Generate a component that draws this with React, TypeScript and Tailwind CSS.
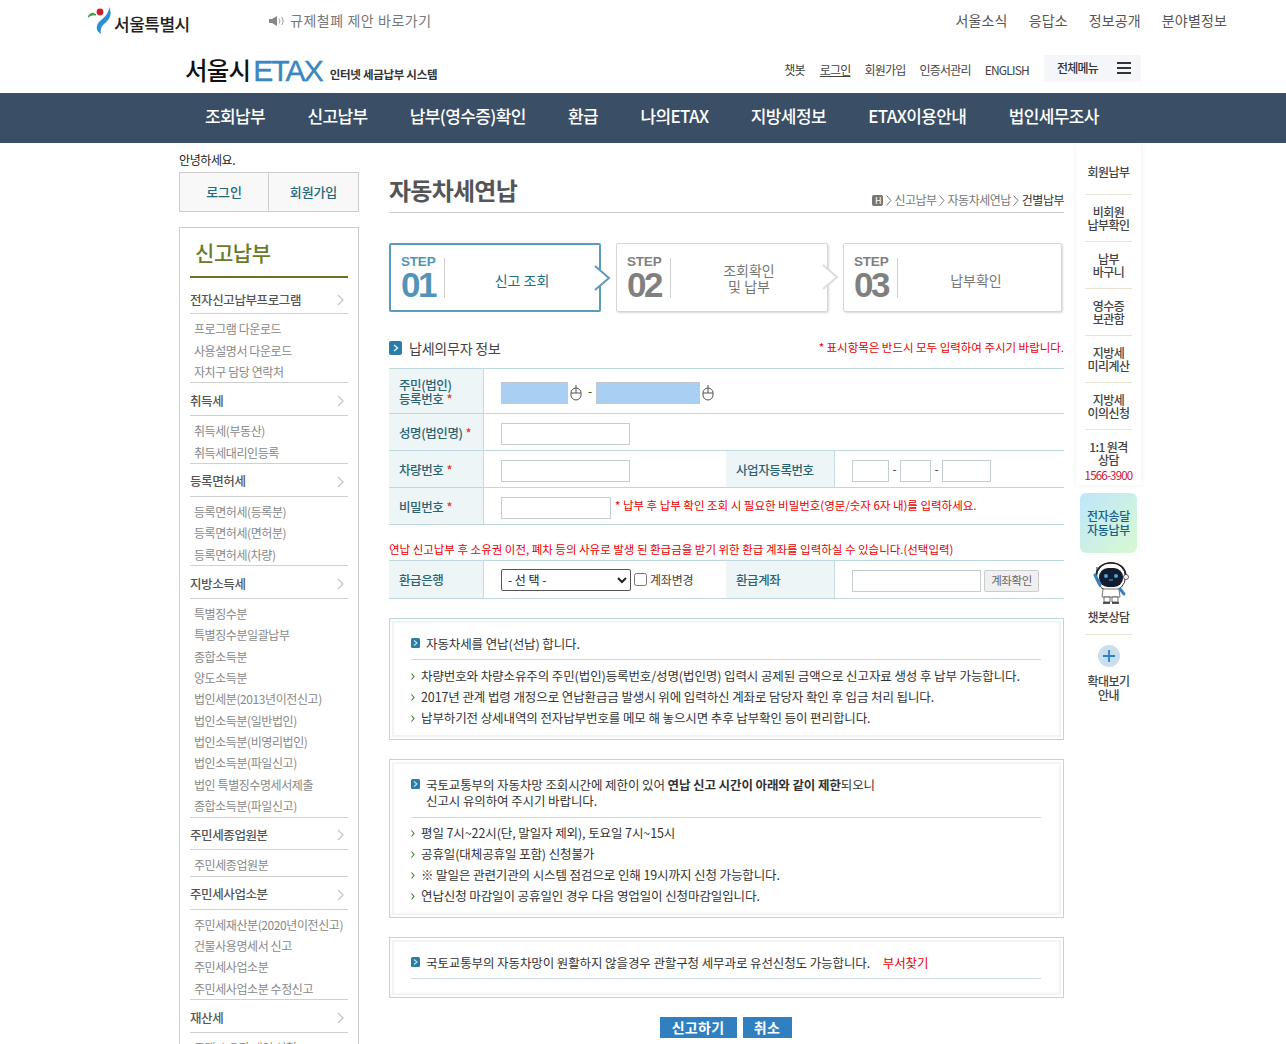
import React from "react";

const font = { fontFamily: '"Noto Sans CJK KR", "Noto Sans", sans-serif' };

const sections: { title: string; items: string[] }[] = [
  { title: "전자신고납부프로그램", items: ["프로그램 다운로드", "사용설명서 다운로드", "자치구 담당 연락처"] },
  { title: "취득세", items: ["취득세(부동산)", "취득세대리인등록"] },
  { title: "등록면허세", items: ["등록면허세(등록분)", "등록면허세(면허분)", "등록면허세(차량)"] },
  {
    title: "지방소득세",
    items: ["특별징수분", "특별징수분일괄납부", "종합소득분", "양도소득분", "법인세분(2013년이전신고)", "법인소득분(일반법인)", "법인소득분(비영리법인)", "법인소득분(파일신고)", "법인 특별징수명세서제출", "종합소득분(파일신고)"],
  },
  { title: "주민세종업원분", items: ["주민세종업원분"] },
  { title: "주민세사업소분", items: ["주민세재산분(2020년이전신고)", "건물사용명세서 신고", "주민세사업소분", "주민세사업소분 수정신고"] },
  { title: "재산세", items: ["주택 소유자 개인 신청"] },
];

function Chevron() {
  return (
    <svg width="7" height="12" viewBox="0 0 7 12" fill="none" className="shrink-0">
      <path d="M1 1l5 5-5 5" stroke="#c4c4c4" strokeWidth="1.2" />
    </svg>
  );
}

function Crumb() {
  return (
    <svg width="6" height="11" viewBox="0 0 6 11" fill="none" className="shrink-0 mx-[2.5px]">
      <path d="M0.5 0.5l4.500 5-4.500 5" stroke="#777" strokeWidth="1" />
    </svg>
  );
}

function MouseIcon() {
  return (
    <svg width="12" height="17" viewBox="0 0 12 17" fill="none" className="shrink-0">
      <rect x="1" y="4" width="10" height="12" rx="5" fill="#fff" stroke="#555" />
      <path d="M1 9h10M6 4v5M6 4V1" stroke="#555" />
    </svg>
  );
}

function Bullet() {
  return (
    <svg width="9" height="10" viewBox="0 0 9 10" className="shrink-0">
      <rect width="9" height="10" rx="1.5" fill="#2b7ca8" />
      <path d="M3 2.5L6 5 3 7.5" stroke="#bfe3ee" strokeWidth="1.2" fill="none" />
    </svg>
  );
}

function Arrow() {
  return (
    <svg width="4" height="7" viewBox="0 0 4 7" fill="none" className="shrink-0">
      <path d="M0.5 0.5l2.5 3-2.5 3" stroke="#3d7a2e" strokeWidth="1.1" />
    </svg>
  );
}

function Th({ children, w }: { children: React.ReactNode; w: string }) {
  return (
    <div className={`${w} pl-[10px] pt-[2px] shrink-0 self-stretch flex items-center bg-[#eef5f7] border-r border-[#c5dce2] text-[12.5px] leading-[14.5px] tracking-[-0.4px] font-medium text-[#2a6473]`}>
      <div>{children}</div>
    </div>
  );
}

const Req = () => <span className="text-[#e03a2e] ml-[3px]">*</span>;

function Input({ w, blue }: { w: string; blue?: boolean }) {
  return <div className={`${w} h-[22px] mt-[3px] shrink-0 border ${blue ? "bg-[#a9d0f3] border-[#c2c8cc]" : "bg-white border-[#c3cdd0]"}`} />;
}

function Step({ no, label, active, w, arrow, labelClass }: { no: string; label: React.ReactNode; active?: boolean; w: string; arrow?: boolean; labelClass: string }) {
  return (
    <div className={`${w} h-[69px] relative flex items-center bg-white rounded-[2px] ${active ? "border-2 border-[#5b9bbd]" : "border border-[#d6d6d6] shadow-[1px_1px_2px_rgba(0,0,0,0.15)]"}`}>
      <div className={`${active ? "text-[#5294b8]" : "text-[#808080]"} pl-[10px] w-[54px] shrink-0 border-r border-[#cfcfcf] h-[40px] flex flex-col justify-center`} style={{ fontFamily: '"Liberation Sans", sans-serif' }}>
        <div className="text-[13.5px] font-bold leading-[13px] tracking-[-0.2px]">STEP</div>
        <div className="text-[35px] font-bold leading-[33px] tracking-[-2.5px]">{no}</div>
      </div>
      <div className={`flex-1 ${labelClass} text-center text-[14px] leading-[16px] ${active ? "text-[#1d7183]" : "text-[#777]"}`}>{label}</div>
      {arrow && (
        <svg width="17" height="26" viewBox="0 0 17 26" fill="none" className="absolute right-[-12px] top-[20px]">
          <path d="M1 1l14 12L1 25" stroke={active ? "#5b9bbd" : "#dcdcdc"} strokeWidth="2" fill="#fff" />
        </svg>
      )}
    </div>
  );
}

function InfoBox({ h, heading, items, line, gap }: { h: string; heading: React.ReactNode; items?: string[]; line: string; gap?: string }) {
  return (
    <div className={`${h} border border-[#bcd6da] p-[2px] bg-white`}>
      <div className="h-full border-2 border-[#f1f4f6] pt-[13px] pl-[17px] pr-[18px]">
        <div className={`${line} border-b border-[#c9dde0] flex text-[12.5px] leading-[16px] tracking-[-0.1px] text-[#333]`}>
          <div className="mt-[2px] mr-[6px]">
            <Bullet />
          </div>
          <div>{heading}</div>
        </div>
        {items && (
          <div className={gap}>
            {items.map((t) => (
              <div key={t} className="h-[21px] flex items-center gap-[6px] text-[12.5px] tracking-[-0.1px] text-[#333] whitespace-nowrap">
                <Arrow />
                <span>{t}</span>
              </div>
            ))}
          </div>
        )}
      </div>
    </div>
  );
}

function RailItem({ lines }: { lines: string[] }) {
  return (
    <div className="h-[47px] mx-[9px] flex flex-col items-center justify-center text-[12px] leading-[13px] font-medium tracking-[-0.6px] text-[#444] border-b border-[#e8e6d3]">
      {lines.map((l) => (
        <div key={l}>{l}</div>
      ))}
    </div>
  );
}

function Robot() {
  return (
    <svg width="38" height="42" viewBox="0 0 38 42" fill="none">
      <path d="M5 14V5" stroke="#3a7fc0" strokeWidth="1.5" />
      <circle cx="19" cy="15" r="14.5" fill="#fff" stroke="#333" strokeWidth="1" />
      <path d="M4 15C4 6 10 1 19 1c9 0 15 5 15 14" stroke="#222" strokeWidth="1.4" />
      <rect x="7" y="6" width="24" height="19" rx="9" fill="#121e30" />
      <circle cx="14" cy="14" r="2" fill="#4aa6e0" />
      <circle cx="24" cy="14" r="2" fill="#4aa6e0" />
      <path d="M17 18h4" stroke="#4aa6e0" strokeWidth="1" />
      <circle cx="34" cy="15" r="2.5" fill="#fff" stroke="#333" strokeWidth="0.8" />
      <path d="M3 13l5 10" stroke="#2f7fc1" strokeWidth="3" strokeLinecap="round" />
      <path d="M11 27h16l1 8H10z" fill="#fff" stroke="#555" strokeWidth="0.8" />
      <path d="M28 27l4 5" stroke="#3a7fc0" strokeWidth="3" strokeLinecap="round" />
      <path d="M12 35h6v5h-6zM20 35h6v5h-6z" fill="#fff" stroke="#444" strokeWidth="0.8" />
      <path d="M11 41h7M20 41h7" stroke="#222" strokeWidth="1.4" />
    </svg>
  );
}

export default function App() {
  return (
    <div className="h-[1044px] w-[1286px] overflow-hidden bg-white relative" style={font}>
      {/* top utility bar */}
      <div className="h-[43px] flex items-center">
        <div className="ml-[88px] w-[181px] flex items-center shrink-0">
          <svg width="26" height="27" viewBox="0 0 26 27" fill="none" className="shrink-0 mb-[3px]">
            <path d="M0 10C2 6 5 5 8 8 5 7.500 3 8 0 10z" fill="#3c9a42" stroke="#3c9a42" />
            <circle cx="12" cy="5" r="3.4" fill="#c9202e" />
            <path d="M21 0c4 8 0 13-5 17-3 3-4 6-3 10-5-3-6-8-1-13 5-4 9-8 9-14z" fill="#2a90cf" />
          </svg>
          <span className="text-[17px] leading-[20px] font-medium tracking-[-0.5px] text-[#222] mt-[4px]">서울특별시</span>
        </div>
        <div className="flex items-center gap-[5px] text-[14px] text-[#777] tracking-[0.55px] pb-[2px]">
          <svg width="16" height="12" viewBox="0 0 16 12">
            <path d="M0 4h3l5-3v10L3 8H0z" fill="#888" />
            <path d="M10 3.500c1.200 1.500 1.200 3.500 0 5M12.500 2c2 2.400 2 5.600 0 8" stroke="#999" fill="none" />
          </svg>
          <span>규제철폐 제안 바로가기</span>
        </div>
        <div className="ml-auto mr-[59px] flex gap-[21px] text-[14px] tracking-[0.15px] text-[#555] pb-[2px]">
          <span>서울소식</span>
          <span>응답소</span>
          <span>정보공개</span>
          <span>분야별정보</span>
        </div>
      </div>
      {/* logo row */}
      <div className="h-[50px] pl-[185px] pr-[145px] flex items-center">
        <span className="text-[24.5px] leading-[30px] font-medium text-[#111] tracking-[-0.8px] mt-[4px]">서울시</span>
        <span className="ml-[3px] text-[30px] leading-[34px] text-[#3a87c0] tracking-[-1.9px] mt-[6px]" style={{ fontFamily: '"Liberation Sans", sans-serif', WebkitTextStroke: "0.4px #3a87c0" }}>ETAX</span>
        <span className="ml-[8px] text-[11.5px] font-bold tracking-[-0.3px] text-[#333] mt-[14px]">인터넷 세금납부 시스템</span>
        <div className="ml-auto flex items-center text-[12px] text-[#444] tracking-[-0.8px]">
          <div className="flex items-center mt-[4px]">
            <span>챗봇</span>
            <span className="ml-[15px] underline">로그인</span>
            <span className="ml-[14px]">회원가입</span>
            <span className="ml-[14px]">인증서관리</span>
            <span className="ml-[14px]">ENGLISH</span>
          </div>
          <div className="ml-[15px] w-[97px] h-[27px] bg-[#f5f6fa] flex items-center pl-[13px]">
            <span className="font-medium text-[#333]">전체메뉴</span>
            <div className="ml-[19px] w-[14px] h-[12px] border-y-2 border-[#333] flex items-center">
              <div className="w-full h-[2px] bg-[#333]" />
            </div>
          </div>
        </div>
      </div>
      {/* main nav */}
      <div className="h-[50px] bg-[#3a4f66] pl-[205px] pb-[5px] flex items-center gap-[42.3px] text-[17px] font-medium tracking-[-0.62px] text-white whitespace-nowrap">
        {["조회납부", "신고납부", "납부(영수증)확인", "환급", "나의ETAX", "지방세정보", "ETAX이용안내", "법인세무조사"].map((m) => (
          <span key={m}>{m}</span>
        ))}
      </div>

      <div className="flex pl-[179px]">
        {/* left column */}
        <div className="w-[180px] shrink-0 pt-[9px]">
          <div className="h-[20px] text-[12px] leading-[16px] tracking-[-0.4px] text-[#222]">안녕하세요.</div>
          <div className="h-[40px] flex border border-[#ccc] bg-[#f8f8f8] text-[13px] font-medium text-[#22697a] tracking-[-0.1px]">
            <div className="w-[89px] flex items-center justify-center border-r border-[#ccc]">로그인</div>
            <div className="flex-1 flex items-center justify-center">회원가입</div>
          </div>
          <div className="mt-[15px] border border-[#ccc] px-[10px] pb-[40px]">
            <div className="h-[50px] pl-[5px] pt-[7px] border-b-2 border-[#6b7426] text-[21px] leading-[34px] font-medium text-[#6b7a2a] tracking-[-0.4px]">신고납부</div>
            {sections.map((s, i) => (
              <div key={s.title}>
                <div className={`${i === 0 ? "h-[36px] pt-[9px]" : "h-[32.6px] pt-[3.5px]"} flex items-center justify-between pr-[4px] border-b border-[#d0d0d0] text-[12.5px] font-medium tracking-[-0.4px] text-[#555]`}>
                  <span>{s.title}</span>
                  <Chevron />
                </div>
                <div className="pt-[4.6px] pl-[4px] border-b border-[#d0d0d0]">
                  {s.items.map((it) => (
                    <div key={it} className="h-[21.3px] flex items-center text-[12px] tracking-[-0.42px] text-[#888] whitespace-nowrap">{it}</div>
                  ))}
                </div>
              </div>
            ))}
          </div>
        </div>

        {/* main */}
        <div className="ml-[30px] w-[675px] shrink-0">
          <div className="mt-[30px] h-[40px] border-b border-[#ccc] flex items-start justify-between">
            <h1 className="text-[24px] leading-[34px] font-bold tracking-[-0.75px] text-[#555]">자동차세연납</h1>
            <div className="mt-[18px] flex items-center text-[12px] tracking-[-0.5px] text-[#777]">
              <span className="w-[11px] h-[11px] bg-[#777] text-white text-[9px] leading-[11px] text-center rounded-[2px]">H</span>
              <Crumb />
              <span>신고납부</span>
              <Crumb />
              <span>자동차세연납</span>
              <Crumb />
              <span className="text-[#333]">건별납부</span>
            </div>
          </div>

          <div className="mt-[30px] flex gap-[15px]">
            <Step no="01" w="w-[212px]" active arrow labelClass="mt-[5px]" label="신고 조회" />
            <Step no="02" w="w-[212px]" arrow labelClass="mt-[1px]" label={<>조회확인<br />및 납부</>} />
            <Step no="03" w="w-[219px]" labelClass="mt-[5px]" label={<span className="pr-[7px]">납부확인</span>} />
          </div>

          <div className="mt-[24px] h-[32px] pb-[8px] flex items-center">
            <svg width="13" height="14" viewBox="0 0 13 14" className="mr-[7px] shrink-0">
              <rect width="13" height="14" rx="2" fill="#2b7ca8" />
              <path d="M5 4l3.500 3L5 10" stroke="#d5eef6" strokeWidth="1.500" fill="none" />
            </svg>
            <span className="text-[14px] text-[#444] tracking-[-0.2px]">납세의무자 정보</span>
            <span className="ml-auto text-[11.5px] text-[#e80000] tracking-[-0.03px]">* 표시항목은 반드시 모두 입력하여 주시기 바랍니다.</span>
          </div>

          <div className="border-t border-[#bfd8dd]">
            <div className="h-[45px] flex items-center border-b border-[#bfd8dd]">
              <Th w="w-[95px]">주민(법인)<br />등록번호<Req /></Th>
              <div className="ml-[17px] flex items-center">
                <Input w="w-[67px]" blue />
                <span className="ml-[2px] mt-[3px]"><MouseIcon /></span>
                <span className="ml-[6px] mr-[4px] text-[12px] text-[#333]">-</span>
                <Input w="w-[104px]" blue />
                <span className="ml-[2px] mt-[3px]"><MouseIcon /></span>
              </div>
            </div>
            <div className="h-[37px] flex items-center border-b border-[#bfd8dd]">
              <Th w="w-[95px]">성명(법인명)<Req /></Th>
              <div className="ml-[17px]"><Input w="w-[129px]" /></div>
            </div>
            <div className="h-[37px] flex items-center border-b border-[#bfd8dd]">
              <Th w="w-[95px]">차량번호<Req /></Th>
              <div className="ml-[17px] w-[225px]"><Input w="w-[129px]" /></div>
              <Th w="w-[109px]">사업자등록번호</Th>
              <div className="ml-[17px] flex items-center text-[12px] text-[#333]">
                <Input w="w-[37px]" />
                <span className="w-[11px] text-center">-</span>
                <Input w="w-[31px]" />
                <span className="w-[11px] text-center">-</span>
                <Input w="w-[49px]" />
              </div>
            </div>
            <div className="h-[37px] flex items-center border-b border-[#bfd8dd]">
              <Th w="w-[95px]">비밀번호<Req /></Th>
              <div className="ml-[17px]"><Input w="w-[110px]" /></div>
              <span className="ml-[4px] text-[11.5px] text-[#e80000] tracking-[-0.02px] whitespace-nowrap">* 납부 후 납부 확인 조회 시 필요한 비밀번호(영문/숫자 6자 내)를 입력하세요.</span>
            </div>
          </div>

          <div className="mt-[15px] h-[20px] text-[11.5px] leading-[18px] text-[#e80000] tracking-[-0.02px] whitespace-nowrap">연납 신고납부 후 소유권 이전, 폐차 등의 사유로 발생 된 환급금을 받기 위한 환급 계좌를 입력하실 수 있습니다.(선택입력)</div>

          <div className="border-y border-[#bfd8dd] h-[39px] flex items-center">
            <Th w="w-[95px]">환급은행</Th>
            <div className="ml-[17px] w-[225px] flex items-center">
              <select className="w-[130px] h-[22px] border border-[#555] rounded-[2px] bg-white text-[12px] text-[#222] pl-[2px]" style={{ appearance: "auto" }}>
                <option>- 선 택 -</option>
              </select>
              <input type="checkbox" readOnly className="ml-[3px] w-[13px] h-[13px]" style={{ appearance: "auto" }} />
              <span className="ml-[3px] text-[12px] tracking-[-0.2px] text-[#444]">계좌변경</span>
            </div>
            <Th w="w-[109px]">환급계좌</Th>
            <div className="ml-[17px] flex items-center">
              <Input w="w-[129px]" />
              <div className="ml-[3px] mt-[3px] w-[55px] h-[22px] border border-[#ccc] rounded-[2px] bg-[#f0f0f0] flex items-center justify-center text-[11.5px] tracking-[-0.4px] text-[#666]">계좌확인</div>
            </div>
          </div>

          <div className="mt-[19px]">
            <InfoBox
              h="h-[122px]"
              line="h-[24px]"
              gap="mt-[6px]"
              heading="자동차세를 연납(선납) 합니다."
              items={["차량번호와 차량소유주의 주민(법인)등록번호/성명(법인명) 입력시 공제된 금액으로 신고자료 생성 후 납부 가능합니다.", "2017년 관계 법령 개정으로 연납환급금 발생시 위에 입력하신 계좌로 담당자 확인 후 입금 처리 됩니다.", "납부하기전 상세내역의 전자납부번호를 메모 해 놓으시면 추후 납부확인 등이 편리합니다."]}
            />
          </div>
          <div className="mt-[19px]">
            <InfoBox
              h="h-[159px]"
              line="h-[41px]"
              gap="mt-[5px]"
              heading={<>국토교통부의 자동차망 조회시간에 제한이 있어 <b className="font-bold">연납 신고 시간이 아래와 같이 제한</b>되오니<br />신고시 유의하여 주시기 바랍니다.</>}
              items={["평일 7시~22시(단, 말일자 제외), 토요일 7시~15시", "공휴일(대체공휴일 포함) 신청불가", "※ 말일은 관련기관의 시스템 점검으로 인해 19시까지 신청 가능합니다.", "연납신청 마감일이 공휴일인 경우 다음 영업일이 신청마감일입니다."]}
            />
          </div>
          <div className="mt-[19px]">
            <InfoBox
              h="h-[61px]"
              line="h-[24px]"
              heading={<>국토교통부의 자동차망이 원활하지 않을경우 관할구청 세무과로 유선신청도 가능합니다. <span className="ml-[10px] text-[#e80000]">부서찾기</span></>}
            />
          </div>

          <div className="mt-[19px] pr-[2px] flex justify-center gap-[6px] text-white text-[14px] tracking-[0.3px] font-bold">
            <div className="w-[77px] h-[21px] bg-[#2f7fc1] flex items-center justify-center">신고하기</div>
            <div className="w-[49px] h-[21px] bg-[#2f7fc1] flex items-center justify-center">취소</div>
          </div>
        </div>

        {/* right rail */}
        <div className="ml-[12px] w-[65px] shrink-0">
          <div className="pt-[5px] h-[342px] bg-white shadow-[0_0_6px_rgba(0,0,0,0.07)]">
            <RailItem lines={["회원납부"]} />
            <RailItem lines={["비회원", "납부확인"]} />
            <RailItem lines={["납부", "바구니"]} />
            <RailItem lines={["영수증", "보관함"]} />
            <RailItem lines={["지방세", "미리계산"]} />
            <RailItem lines={["지방세", "이의신청"]} />
            <div className="pt-[10px] text-center text-[12px] leading-[13px] font-medium tracking-[-0.6px] text-[#444]">1:1 원격<br />상담</div>
            <div className="mt-[3px] text-center text-[11.5px] leading-[13px] tracking-[-0.8px] text-[#c8103c]">1566-3900</div>
          </div>
          <div className="mt-[8px] ml-[4px] w-[57px] h-[60px] rounded-[6px] bg-gradient-to-br from-[#bfe6fa] to-[#d8f9d0] flex items-center justify-center text-center text-[12px] leading-[14px] font-medium tracking-[-0.3px] text-[#1a5f8a]">전자송달<br />자동납부</div>
          <div className="mt-[9px] flex justify-center ml-[5px]"><Robot /></div>
          <div className="mt-[5px] mx-[9px] h-[26px] border-b border-[#e8e6d3] text-center text-[12px] leading-[16px] font-medium tracking-[-0.6px] text-[#444]">챗봇상담</div>
          <div className="mt-[10px] flex justify-center">
            <div className="w-[22px] h-[22px] rounded-full bg-[#c9dff0] flex items-center justify-center">
              <svg width="12" height="12" viewBox="0 0 12 12"><path d="M6 0v12M0 6h12" stroke="#2f7fc1" strokeWidth="1.800" /></svg>
            </div>
          </div>
          <div className="mt-[7px] text-center text-[12px] leading-[14px] font-medium tracking-[-0.6px] text-[#444]">확대보기<br />안내</div>
        </div>
      </div>
    </div>
  );
}
